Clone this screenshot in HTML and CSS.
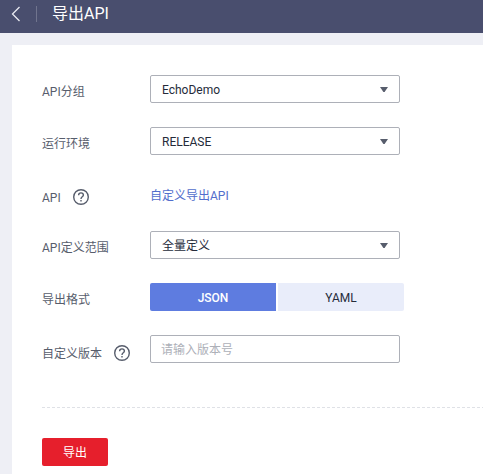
FILE: index.html
```html
<!DOCTYPE html>
<html lang="zh-CN">
<head>
<meta charset="utf-8">
<title>导出API</title>
<link rel="stylesheet" href="styles.css">
</head>
<body>
<header class="topbar">
  <svg class="back" width="10" height="16" viewBox="0 0 10 16"><path d="M8.5 1 1.5 8l7 7"/></svg>
  <span class="divider"></span>
  <h1 class="title">导出API</h1>
</header>
<main class="panel">
  <div class="row">
    <div class="label">API分组</div>
    <div class="field"><span class="value">EchoDemo</span><svg class="caret" width="8" height="5" viewBox="0 0 8 5"><path d="M0 0h8L4.6 5H3.4z"/></svg></div>
  </div>
  <div class="row">
    <div class="label">运行环境</div>
    <div class="field"><span class="value">RELEASE</span><svg class="caret" width="8" height="5" viewBox="0 0 8 5"><path d="M0 0h8L4.6 5H3.4z"/></svg></div>
  </div>
  <div class="row row-link">
    <div class="label">API<svg class="help" width="16" height="16" viewBox="0 0 16 16"><circle cx="8" cy="8" r="7.3"/><path d="M5.6 6.3c0-1.6 1-2.4 2.4-2.4s2.4.8 2.4 2.2c0 1.7-2.4 1.8-2.4 3.8M8 11.1v1.4"/></svg></div>
    <a class="link">自定义导出API</a>
  </div>
  <div class="row">
    <div class="label">API定义范围</div>
    <div class="field"><span class="value">全量定义</span><svg class="caret" width="8" height="5" viewBox="0 0 8 5"><path d="M0 0h8L4.6 5H3.4z"/></svg></div>
  </div>
  <div class="row">
    <div class="label">导出格式</div>
    <div class="tabs"><div class="tab active">JSON</div><div class="tab">YAML</div></div>
  </div>
  <div class="row row-version">
    <div class="label">自定义版本<svg class="help" width="16" height="16" viewBox="0 0 16 16"><circle cx="8" cy="8" r="7.3"/><path d="M5.6 6.3c0-1.6 1-2.4 2.4-2.4s2.4.8 2.4 2.2c0 1.7-2.4 1.8-2.4 3.8M8 11.1v1.4"/></svg></div>
    <input class="field input" placeholder="请输入版本号">
  </div>
  <div class="separator"></div>
  <button class="submit">导出</button>
</main>
</body>
</html>
```

FILE: styles.css
```css
* { box-sizing: border-box; }
body {
  margin: 0;
  height: 474px;
  overflow: hidden;
  background: #eeeff5;
  font: 12px/18px Roboto, "Noto Sans CJK SC", sans-serif;
  color: #252b3a;
}
.topbar {
  display: flex;
  align-items: center;
  height: 33px;
  padding: 0 0 6px 11px;
  background: #494e6e;
}
.back { fill: none; stroke: #e8e9f0; stroke-width: 1.3; }
.divider { width: 1px; height: 16px; margin: 0 15px; background: #70748e; }
.title { margin: 0; padding-top: 1px; font-size: 16px; line-height: 24px; font-weight: 400; color: #fff; }
.panel {
  height: 429px;
  margin: 12px 0 0 12px;
  padding: 30px 0 0 30px;
  background: #fff;
}
.row { display: flex; height: 28px; margin-bottom: 24px; }
.label {
  display: flex;
  align-items: center;
  width: 108px;
  padding-top: 6px;
  color: #575d6c;
}
.help { margin: -2px 0 0 12px; fill: none; stroke: #575d6c; stroke-width: 1.4; }
.row-link .label { padding-top: 10px; }
.link { align-self: center; padding-top: 6px; color: #526ecc; }
.field {
  display: flex;
  align-items: center;
  justify-content: space-between;
  width: 250px;
  padding: 0 11px;
  border: 1px solid #adb0b8;
  border-radius: 2px;
  background: #fff;
}
.value { padding-top: 2px; }
.caret { fill: #575d6c; }
.input { padding: 2px 10px 0; font: inherit; }
.input::placeholder { color: #adb0b8; }
.row-version .label { padding-top: 10px; }
.tabs { display: flex; gap: 2px; }
.tab {
  display: flex;
  align-items: center;
  justify-content: center;
  width: 126px;
  padding-top: 2px;
  background: #e9edfa;
  border-radius: 0 2px 2px 0;
}
.tab.active { background: #5e7ce0; color: #fff; font-weight: 500; border-radius: 2px 0 0 2px; }
.separator {
  height: 1px;
  margin: 44px 0 30px;
  background: repeating-linear-gradient(90deg, #dfe1e6 0 3px, transparent 3px 5px);
}
.submit {
  display: block;
  width: 66px;
  height: 28px;
  padding: 2px 0 0;
  border: 0;
  border-radius: 2px;
  background: #e61f2c;
  color: #fff;
  font: inherit;
}
```
